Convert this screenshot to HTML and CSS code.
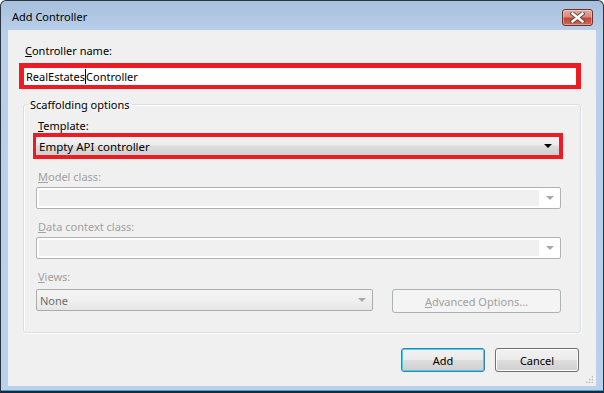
FILE: index.html
```html
<!DOCTYPE html>
<html lang="en">
<head>
    <meta charset="UTF-8">
    <title>Add Controller</title>
    <link rel="stylesheet" href="styles.css">
</head>
<body>
    <div class="window">
        <div class="titlebar">
            <span class="title">Add Controller</span>
            <button class="close-btn" aria-label="Close">
                <svg width="15" height="11" viewBox="0 0 15 11">
                    <path d="M2.5 1.5 L12.5 9.5 M12.5 1.5 L2.5 9.5" stroke="#5a4644" stroke-width="4.2" stroke-linecap="square"/>
                    <path d="M2.5 1.5 L12.5 9.5 M12.5 1.5 L2.5 9.5" stroke="#ffffff" stroke-width="2.4" stroke-linecap="square"/>
                </svg>
            </button>
        </div>

        <div class="client">
            <label class="field-label" for="controllerName"><u>C</u>ontroller name:</label>
            <div class="highlight name-box">
                <div class="textbox" id="controllerName">RealEstates<span class="caret"></span>Controller</div>
            </div>

            <fieldset class="group">
                <legend>Scaffolding options</legend>

                <div class="field-label indent first"><u>T</u>emplate:</div>
                <div class="highlight template-box">
                    <div class="dropdown">
                        <span>Empty API controller</span>
                        <span class="arrow"></span>
                    </div>
                </div>

                <div class="field-label indent disabled"><u>M</u>odel class:</div>
                <div class="combo">
                    <div class="combo-text"></div>
                    <span class="arrow gray"></span>
                </div>

                <div class="field-label indent disabled"><u>D</u>ata context class:</div>
                <div class="combo">
                    <div class="combo-text"></div>
                    <span class="arrow gray"></span>
                </div>

                <div class="field-label indent disabled"><u>V</u>iews:</div>
                <div class="views-row">
                    <div class="views-combo">
                        <span>None</span>
                        <span class="arrow gray"></span>
                    </div>
                    <button class="btn btn-disabled"><u>A</u>dvanced Options...</button>
                </div>
            </fieldset>

            <div class="actions">
                <button class="btn btn-default">Add</button>
                <button class="btn">Cancel</button>
            </div>
            <div class="grip"></div>
        </div>
    </div>
</body>
</html>
```

FILE: styles.css
```css
* {
    box-sizing: border-box;
    margin: 0;
    padding: 0;
}

body {
    width: 604px;
    height: 393px;
    background-color: #ffffff;
    font-family: 'Segoe UI', 'Noto Sans', sans-serif;
    font-size: 11px;
    color: #000;
    overflow: hidden;
}

.window {
    width: 604px;
    height: 393px;
    display: flex;
    flex-direction: column;
    border: 1px solid #2b3440;
    border-bottom: 2px solid #1a2a36;
    border-radius: 6px 6px 0 0;
    background: linear-gradient(#a7c0dc 0, #b7cfe9 30px, #b9d1ea 100%);
    padding: 0 7px 5px 7px;
    box-shadow: inset 0 -1px 0 #3fa9d6;
}

.titlebar {
    height: 29px;
    display: flex;
    align-items: center;
    justify-content: space-between;
    padding-left: 4px;
}

.title {
    font-size: 11px;
    color: #000;
    padding-top: 1px;
}

.close-btn {
    width: 31px;
    height: 17px;
    margin-right: 3px;
    margin-top: 3px;
    border: 1px solid #6b3430;
    border-radius: 3px;
    background: linear-gradient(#e3aa9e 0, #d98a7b 45%, #c4453a 55%, #cf6a50 100%);
    box-shadow: inset 0 0 0 1px rgba(255, 255, 255, 0.35);
    display: flex;
    align-items: center;
    justify-content: center;
}

.client {
    flex: 1;
    background-color: #f0f0f0;
    display: flex;
    flex-direction: column;
    padding: 13px 15px 0 11px;
    position: relative;
}

.field-label {
    display: block;
    height: 15px;
    line-height: 15px;
    padding-left: 6px;
    color: #000;
}

.field-label u {
    text-decoration: underline;
}

.disabled {
    color: #a0a0a0;
}

.highlight {
    border: 5px solid #ed1c24;
    background-color: #fff;
}

.name-box {
    margin-top: 5px;
    height: 26px;
    border-bottom-width: 4px;
}

.textbox {
    height: 17px;
    line-height: 17px;
    padding-left: 2px;
    font-size: 11px;
}

.caret {
    display: inline-block;
    width: 1px;
    height: 15px;
    background-color: #000;
    vertical-align: -3px;
}

.group {
    margin: 8px 0 0 4px;
    border: 1px solid #d5dfe5;
    border-radius: 3px;
    box-shadow: inset 1px 1px 0 #ffffff, 1px 1px 0 #ffffff;
    height: 236px;
    padding: 0 19px 0 12px;
}

.group legend {
    margin-left: -8px;
    padding: 0 2px;
    height: 15px;
    line-height: 15px;
}

.indent {
    padding-left: 2px;
}

.group .field-label.first {
    margin-top: 6px;
}

.template-box {
    margin: 0 -2px 0 -3px;
    height: 26px;
    border-width: 4px 4px 4px 3px;
    background-color: #fff;
}

.dropdown {
    height: 18px;
    display: flex;
    align-items: center;
    justify-content: space-between;
    padding: 0 7px 0 3px;
    background: linear-gradient(#f3f3f3 0, #ebebeb 45%, #dddddd 50%, #cfcfcf 100%);
    font-size: 11.5px;
}

.arrow {
    width: 0;
    height: 0;
    border-left: 4px solid transparent;
    border-right: 4px solid transparent;
    border-top: 4px solid #000;
    display: block;
}

.arrow.gray {
    border-top-color: #a9a9a9;
}

.combo {
    margin-top: 3px;
    height: 22px;
    border: 1px solid #b1b1b1;
    border-radius: 2px;
    background-color: #fff;
    padding: 2px 0 2px 2px;
    display: flex;
    align-items: center;
}

.combo-text {
    flex: 1;
    height: 16px;
    background-color: #f0f0f0;
}

.combo .arrow {
    margin: 0 6px 0 7px;
}

.group .field-label.disabled {
    margin-top: 10px;
}

.views-row {
    margin-top: 5px;
    display: flex;
    gap: 19px;
    align-items: flex-start;
}

.views-combo {
    width: 337px;
    height: 22px;
    border: 1px solid #acacac;
    border-radius: 2px;
    background: linear-gradient(#f4f4f4 0, #f0f0f0 50%, #e6e6e6 100%);
    display: flex;
    align-items: center;
    justify-content: space-between;
    padding: 0 6px 0 3px;
    color: #6d6d6d;
}

.btn {
    font-family: 'Segoe UI', 'Noto Sans', sans-serif;
    font-size: 11px;
    height: 24px;
    border: 1px solid #707070;
    border-radius: 3px;
    background: linear-gradient(#f2f2f2 0, #ebebeb 50%, #dddddd 51%, #cfcfcf 100%);
    box-shadow: inset 0 0 0 1px #fcfcfc;
    color: #000;
}

.btn-disabled {
    width: 169px;
    border-color: #adb2b5;
    background: #f4f4f4;
    box-shadow: none;
    color: #a0a0a0;
}

.actions {
    display: flex;
    justify-content: flex-end;
    gap: 10px;
    margin-top: 15px;
    padding-right: 2px;
}

.actions .btn {
    width: 84px;
}

.btn-default {
    border-color: #3c7fb1;
    box-shadow: inset 0 0 0 1px #48d0f2;
}

.grip {
    position: absolute;
    right: 3px;
    bottom: 3px;
    width: 8px;
    height: 8px;
    background-image: radial-gradient(circle, #b5b5b5 0.8px, transparent 1.1px);
    background-size: 3px 3px;
    clip-path: polygon(100% 0, 100% 100%, 0 100%);
}
```
